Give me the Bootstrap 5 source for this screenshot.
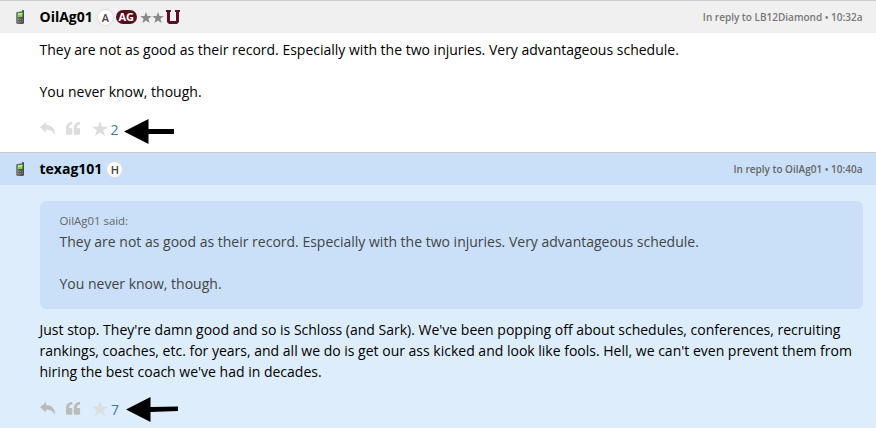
<!DOCTYPE html>
<html lang="en">
<head>
<meta charset="utf-8">
<title>Thread</title>
<meta name="viewport" content="width=device-width, initial-scale=1">
<link href="https://cdn.jsdelivr.net/npm/bootstrap@5.3.0/dist/css/bootstrap.min.css" rel="stylesheet">
<style>
body{font:14px/21px "Open Sans",sans-serif;color:#000;background:#fff;overflow:hidden}
.post{border-top:1px solid #ccc}
.first-post{height:152px}
.own-post{background:#deedfc;height:276px}
.post-head{height:32px;background:#f0f0f0;padding:0 13.5px 0 15px}
.own-post .post-head{background:#cae0f9}
.phone{width:10px;height:15px;margin-right:14.5px}
.user{font-size:14px;line-height:20px;padding-bottom:1px}
.meta{font-size:10px;font-weight:600;color:#777}
.own-post .meta{color:#666}
.tag{width:15px;height:15px;margin-left:5px;border-radius:50%;background:#fff;box-shadow:0 0 1px 1px #ddd;font-size:11px;font-weight:600;line-height:15px;color:#444;text-align:center}
.tag-ag{width:21px;height:14px;margin-left:3px;line-height:14px;border-radius:7px;background:#5a0e1c;color:#fff;font-size:11px;font-weight:700;text-align:center}
.rank{color:#888;margin-left:3px}
.team{margin-left:2.5px}
.post-body{padding:6px 13px 0 39.5px}
.own-post .post-body{padding-left:40px}
.reply-text{margin:10px 0 0 -.5px}
.quote{margin-top:10px;height:108px;background:#cae0f9;border-radius:6px;padding:10px 19.5px;color:#444}
.quote-by{font-size:11.4px;color:#666;line-height:20px}
.actions{height:26px;color:#ddd;margin-top:13px;padding-top:2px}
.own-post .actions{color:#bbb}
.actions .star{color:#ddd}
.act-icon{margin-bottom:2px}
.count{color:#337ab7;width:10px;margin-left:2px;padding-top:1px}
.pointer{margin-left:3px}
.first-post .pointer{margin-top:4px}
svg{display:block;flex:none}
</style>
</head>
<body>
<svg width="0" height="0" class="position-absolute" aria-hidden="true">
<defs>
<linearGradient id="shell"><stop offset="0" stop-color="#888"/><stop offset=".5" stop-color="#606060"/><stop offset="1" stop-color="#444"/></linearGradient>
<symbol id="phone" viewBox="0 0 10 15"><path d="M7 0h2v5H7z" fill="#666"/><path d="M1.5 2 8.5 1.2 9 2v11l-1 1H2l-1-1V3z" fill="url(#shell)"/><path d="m3 3.3 4.5-.5v4L3 7z" fill="#73e83c"/><path d="M3 3.3 7.5 2.8V4L3 5z" fill="#b0f58c"/><path d="M3 9h1v1H3zm2 0h1v1H5zm2 0h1v1H7zM3 11h1v1H3zm2 0h1v1H5zm2 0h1v1H7z" fill="#888"/></symbol>
<symbol id="reply" viewBox="0 0 15 13"><path d="M0 5.200 6 0v3c6 .2 9 3.600 9 10-1.800-3.500-4.200-5.200-9-5.200v2.800z" fill="currentColor"/></symbol>
<symbol id="quote" viewBox="0 0 15 13"><path id="mark" d="M6.3 0v2.400C4 2.600 3 3.800 3 6h2q1.300 0 1.300 1.300v4.100Q6.300 12.800 5 12.800H1.300Q0 12.800 0 11.400V6.500C0 2.500 2 0 6.300 0z" fill="currentColor"/><use href="#mark" x="7.8"/></symbol>
<symbol id="star" viewBox="0 0 16 15"><path d="m8 0 2 5.600 6 .1-4.800 3.600L13 15l-5-3.400L3 15l1.800-5.700L0 5.700l6-.1z" fill="currentColor"/></symbol>
</defs>
</svg>

<article class="post first-post">
  <header class="post-head d-flex align-items-center">
    <svg class="phone"><use href="#phone"/></svg>
    <strong class="user">OilAg01</strong>
    <span class="tag">A</span>
    <span class="tag-ag">AG</span>
    <span class="rank d-flex"><svg width="12" height="11"><use href="#star"/></svg><svg width="12" height="11"><use href="#star"/></svg></span>
    <svg class="team" width="14" height="14" viewBox="0 0 14 14"><path d="M0 0h5v2H4v9h6V2H9V0h5v2h-1v10l-2 2H3l-2-2V2H0z" fill="#5a0e2a"/></svg>
    <span class="meta ms-auto">In reply to LB12Diamond • 10:32a</span>
  </header>
  <div class="post-body">
    <p class="mb-0">They are not as good as their record. Especially with the two injuries. Very advantageous schedule.<br><br>You never know, though.</p>
    <div class="actions d-flex align-items-center">
      <svg class="act-icon" width="15" height="13"><use href="#reply"/></svg>
      <svg class="act-icon mx-2" width="20" height="13"><use href="#quote" x="3" width="15" height="13"/></svg>
      <svg class="act-icon star" width="18" height="15"><use href="#star" x="1" width="16" height="15"/></svg>
      <span class="count">2</span>
      <svg class="pointer" width="50" height="25" viewBox="0 0 50 25"><path d="M0 12.500 24.500 0v10H50v5H24.500v10z"/></svg>
    </div>
  </div>
</article>

<article class="post own-post">
  <header class="post-head d-flex align-items-center">
    <svg class="phone"><use href="#phone"/></svg>
    <strong class="user">texag101</strong>
    <span class="tag">H</span>
    <span class="meta ms-auto">In reply to OilAg01 • 10:40a</span>
  </header>
  <div class="post-body">
    <blockquote class="quote mb-0">
      <div class="quote-by">OilAg01 said:</div>
      They are not as good as their record. Especially with the two injuries. Very advantageous schedule.<br><br>You never know, though.
    </blockquote>
    <p class="reply-text">Just stop. They're damn good and so is Schloss (and Sark). We've been popping off about schedules, conferences, recruiting<br>rankings, coaches, etc. for years, and all we do is get our ass kicked and look like fools. Hell, we can't even prevent them from<br>hiring the best coach we've had in decades.</p>
    <div class="actions d-flex align-items-center">
      <svg class="act-icon" width="15" height="13"><use href="#reply"/></svg>
      <svg class="act-icon mx-2" width="20" height="13"><use href="#quote" x="3" width="15" height="13"/></svg>
      <svg class="act-icon star" width="18" height="15"><use href="#star" x="1" width="16" height="15"/></svg>
      <span class="count">7</span>
      <svg class="pointer" width="54" height="25" viewBox="-2 0 54 25"><path d="M0 12.500 24.500 0v10L52 9.500v4.500L24.500 15v10z"/></svg>
    </div>
  </div>
</article>
<script src="https://cdn.jsdelivr.net/npm/bootstrap@5.3.0/dist/js/bootstrap.bundle.min.js"></script>
</body>
</html>
